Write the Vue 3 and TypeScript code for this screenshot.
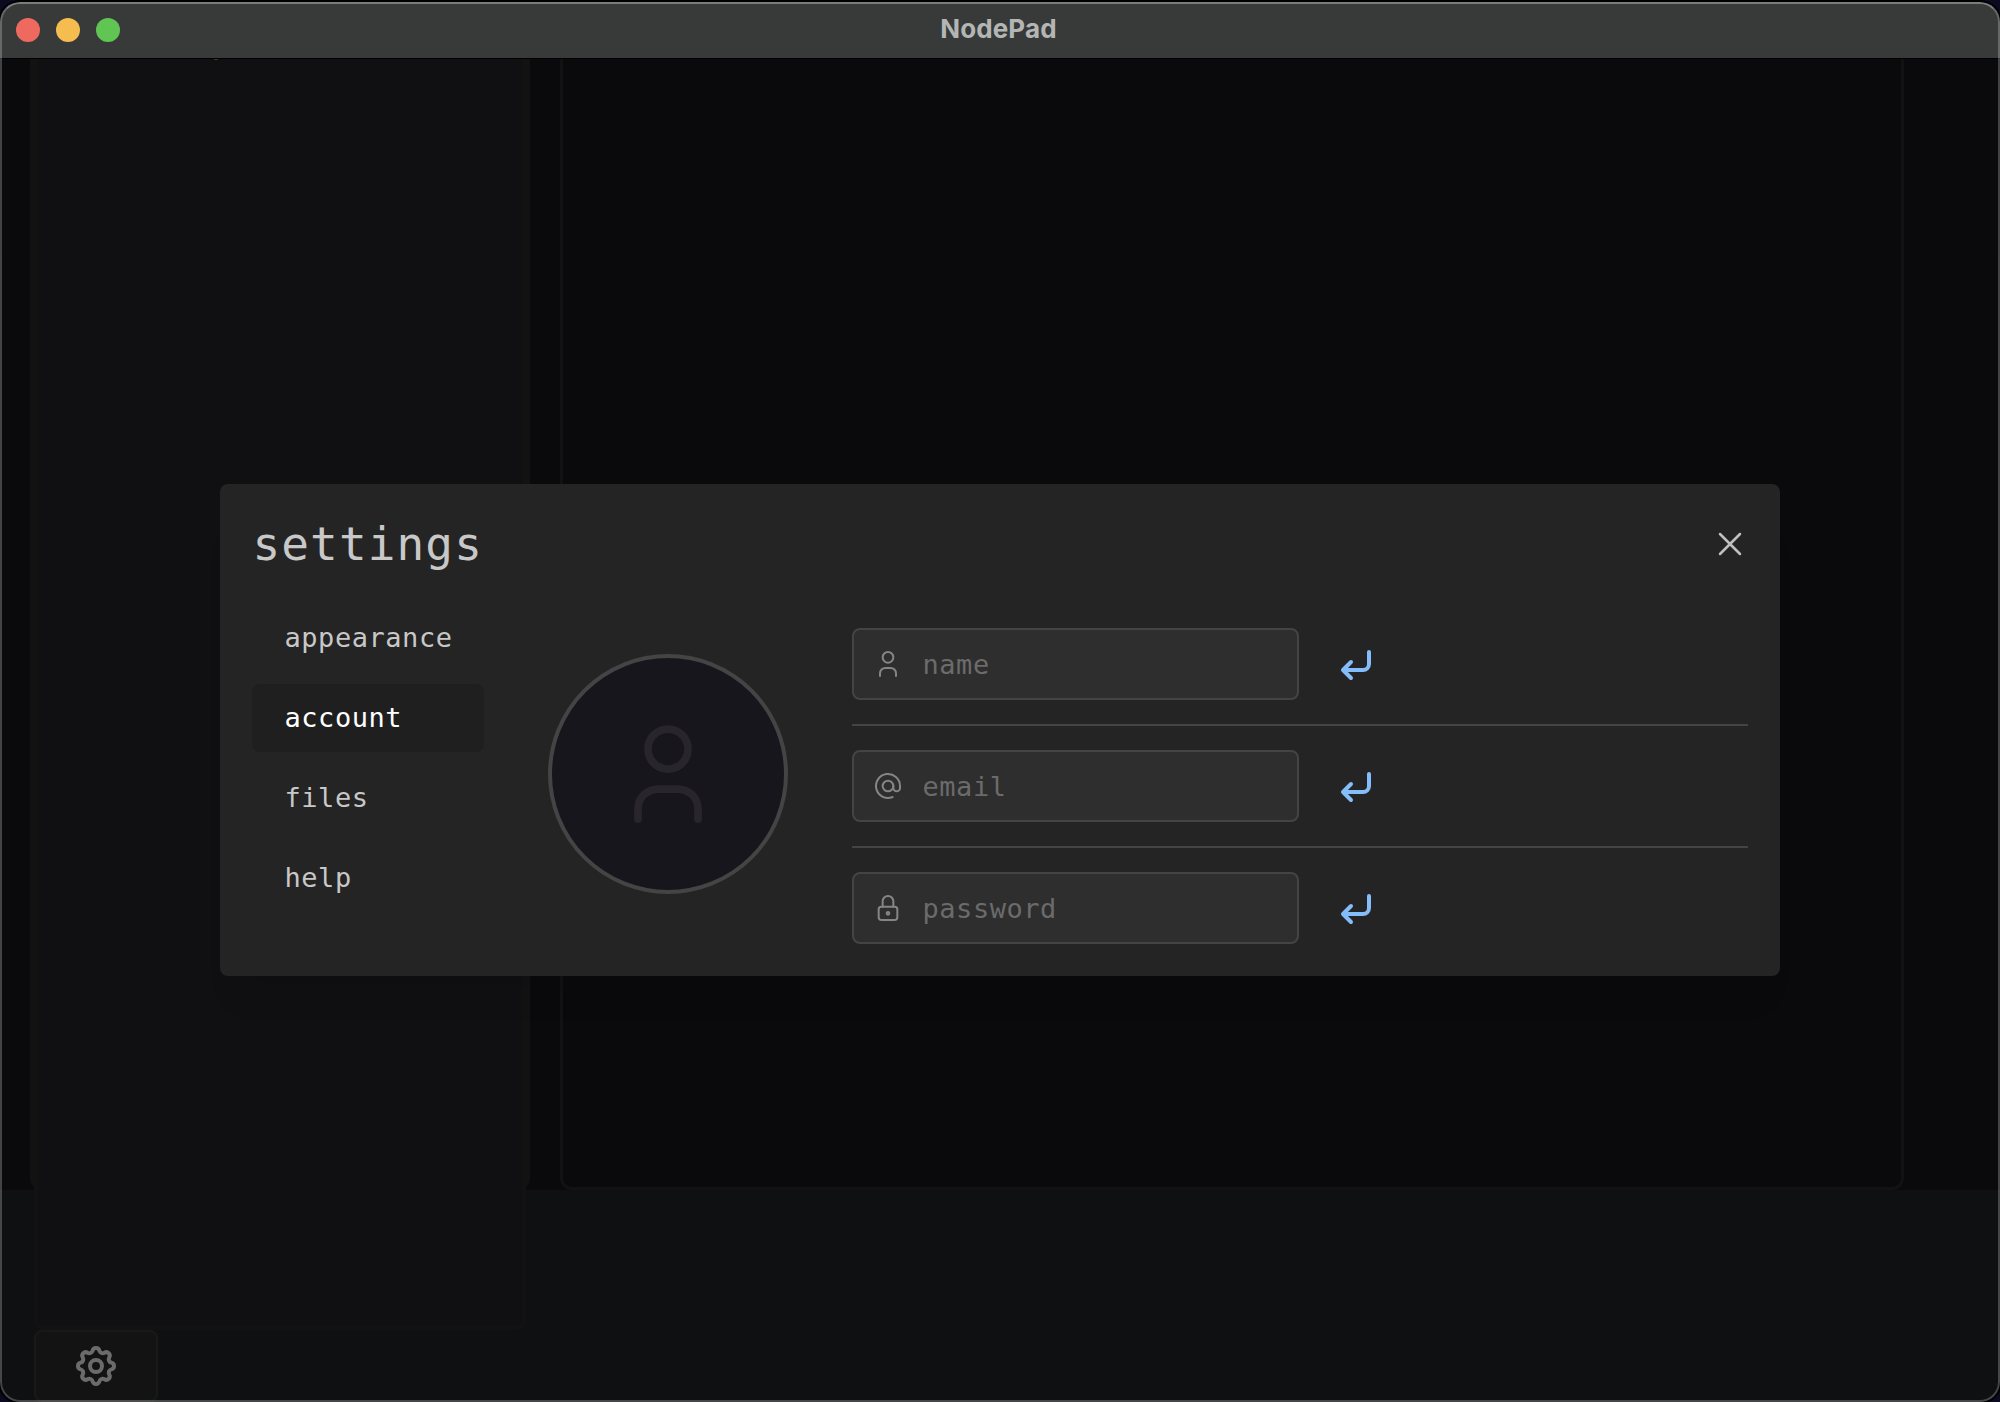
<script setup lang="ts">
import { ref } from 'vue'

interface Field {
  id: string
  icon: string[]
}

const tabs: string[] = ['appearance', 'account', 'files', 'help']
const active = ref<string>('account')

const userPaths: string[] = [
  'M8 7a4 4 0 1 0 8 0a4 4 0 1 0 -8 0',
  'M6 21v-2a4 4 0 0 1 4 -4h4a4 4 0 0 1 4 4v2',
]

const fields: Field[] = [
  { id: 'name', icon: userPaths },
  {
    id: 'email',
    icon: [
      'M8 12a4 4 0 1 0 8 0a4 4 0 1 0 -8 0',
      'M16 12v1.5a2.5 2.5 0 0 0 5 0v-1.5a9 9 0 1 0 -5.5 8.28',
    ],
  },
  {
    id: 'password',
    icon: [
      'M5 13a2 2 0 0 1 2 -2h10a2 2 0 0 1 2 2v6a2 2 0 0 1 -2 2h-10a2 2 0 0 1 -2 -2z',
      'M11 16a1 1 0 1 0 2 0a1 1 0 0 0 -2 0',
      'M8 11v-4a4 4 0 1 1 8 0v4',
    ],
  },
]
</script>

<template>
  <div class="desktop">
    <div class="window">
      <header class="titlebar">
        <div class="lights">
          <i class="light red"></i>
          <i class="light amber"></i>
          <i class="light green"></i>
        </div>
        <h1 class="app-title">NodePad</h1>
      </header>

      <div class="workspace">
        <div class="panes">
          <div class="sidebar"></div>
          <div class="editor"></div>
        </div>
        <div class="sidebar-inner"><i class="speck"></i></div>
        <button class="gear" aria-label="settings">
          <svg viewBox="0 0 24 24" width="48" height="48" stroke-width="2">
            <path d="M10.325 4.317c.426 -1.756 2.924 -1.756 3.35 0a1.724 1.724 0 0 0 2.573 1.066c1.543 -.94 3.31 .826 2.37 2.37a1.724 1.724 0 0 0 1.065 2.572c1.756 .426 1.756 2.924 0 3.35a1.724 1.724 0 0 0 -1.066 2.573c.94 1.543 -.826 3.31 -2.37 2.37a1.724 1.724 0 0 0 -2.572 1.065c-.426 1.756 -2.924 1.756 -3.35 0a1.724 1.724 0 0 0 -2.573 -1.066c-1.543 .94 -3.31 -.826 -2.37 -2.37a1.724 1.724 0 0 0 -1.065 -2.572c-1.756 -.426 -1.756 -2.924 0 -3.35a1.724 1.724 0 0 0 1.066 -2.573c-.94 -1.543 .826 -3.31 2.37 -2.37c1 .608 2.296 .07 2.572 -1.065z" />
            <circle cx="12" cy="12" r="3" />
          </svg>
        </button>
      </div>

      <section class="modal">
        <div class="modal-head">
          <h2>settings</h2>
          <button class="close" aria-label="close">
            <svg viewBox="0 0 24 24" width="40" height="40" stroke-width="1.5">
              <path d="M18 6l-12 12M6 6l12 12" />
            </svg>
          </button>
        </div>
        <div class="modal-body">
          <nav>
            <button
              v-for="tab in tabs"
              :key="tab"
              class="tab"
              :class="{ active: tab === active }"
              @click="active = tab"
            >{{ tab }}</button>
          </nav>
          <div class="avatar">
            <svg viewBox="0 0 24 24" width="120" height="120" stroke-width="1.55">
              <path v-for="d in userPaths" :key="d" :d="d" />
            </svg>
          </div>
          <div class="fields">
            <div v-for="field in fields" :key="field.id" class="row">
              <div class="field">
                <svg viewBox="0 0 24 24" width="32" height="32" stroke-width="1.5">
                  <path v-for="d in field.icon" :key="d" :d="d" />
                </svg>
                <span>{{ field.id }}</span>
              </div>
              <button class="submit" :aria-label="'save ' + field.id">
                <svg viewBox="0 0 24 24" width="48" height="48" stroke-width="2">
                  <path d="M18 6v6a3 3 0 0 1 -3 3h-10l4 -4m0 8l-4 -4" />
                </svg>
              </button>
            </div>
          </div>
        </div>
      </section>
    </div>
  </div>
</template>

<style>
body {
  margin: 0;
  overflow: hidden;
  background: #0b0a1e;
}
</style>

<style scoped>
* {
  box-sizing: border-box;
}
button {
  border: 0;
  margin: 0;
  padding: 0;
  background: none;
  color: inherit;
  font: inherit;
  letter-spacing: inherit;
}
svg {
  display: block;
  flex: none;
  fill: none;
  stroke: currentColor;
  stroke-linecap: round;
  stroke-linejoin: round;
}
.desktop {
  width: 2000px;
  height: 1402px;
  padding-top: 2px;
  background: #0b0a1e;
  font-family: 'DejaVu Sans Mono', monospace;
}
.window {
  position: relative;
  width: 2000px;
  height: 1400px;
  border-radius: 20px;
  overflow: hidden;
  background: #0a0a0c;
  box-shadow: 0 0 0 2px #000;
}
.window::after {
  content: '';
  position: absolute;
  inset: 0;
  border: 2px solid rgba(255, 255, 255, 0.23);
  border-top-color: rgba(255, 255, 255, 0.34);
  border-radius: 20px;
  pointer-events: none;
}
.titlebar {
  position: relative;
  display: flex;
  align-items: center;
  justify-content: center;
  height: 57px;
  padding: 0 3px 2px 0;
  background: #383a39;
  border-bottom: 1px solid #000;
}
.lights {
  position: absolute;
  left: 16px;
  top: 16px;
  display: flex;
  gap: 16px;
}
.light {
  width: 24px;
  height: 24px;
  border-radius: 50%;
}
.red { background: #ee6a5f; }
.amber { background: #f5bd4f; }
.green { background: #61c554; }
.app-title {
  margin: 0;
  font: 700 26px/32px Inter, sans-serif;
  letter-spacing: 0.1px;
  color: #b4b6b5;
}
.workspace {
  position: relative;
  height: 1343px;
  background: #0e1011;
}
.panes {
  display: flex;
  gap: 30px;
  height: 1131px;
  padding-left: 30px;
  background: #0a0a0c;
}
.sidebar {
  width: 500px;
  background: #101012;
  border: solid #121212;
  border-width: 0 4px 4px;
  border-radius: 0 0 12px 12px;
}
.editor {
  width: 1344px;
  background: #0a0a0c;
  border: solid #121212;
  border-width: 0 3px 3px;
  border-radius: 0 0 12px 12px;
}
.sidebar-inner {
  position: absolute;
  left: 34px;
  top: 0;
  width: 492px;
  height: 1271px;
  background: #101012;
  border: solid #121212;
  border-width: 0 4px 4px;
  border-radius: 0 0 10px 10px;
}
.speck {
  display: block;
  width: 4px;
  height: 1px;
  margin-left: 176px;
  background: #3a3a3a;
}
.gear {
  position: absolute;
  left: 34px;
  top: 1271px;
  display: flex;
  align-items: center;
  justify-content: center;
  width: 124px;
  height: 72px;
  background: #131313;
  border: 2px solid #191919;
  border-radius: 8px;
  color: #6b6b6b;
}
.modal {
  position: absolute;
  left: 220px;
  top: 482px;
  width: 1560px;
  height: 492px;
  padding: 32px;
  border-radius: 8px;
  background: #242424;
  box-shadow: 0 36px 32px -20px rgba(0, 0, 0, 0.1);
}
.modal-head {
  display: flex;
  justify-content: space-between;
  height: 88px;
}
.modal-head h2 {
  margin: 0 0 0 0.5px;
  font-weight: 400;
  font-size: 46px;
  letter-spacing: 1.11px;
  line-height: 56px;
  color: #c8c8c8;
}
.close {
  width: 40px;
  height: 40px;
  margin: 7.5px -1.5px 0 0;
  color: #c0c0c0;
}
.modal-body {
  display: flex;
}
nav {
  display: flex;
  flex-direction: column;
  gap: 12px;
  width: 232px;
}
.tab {
  height: 68px;
  padding: 0 31.5px 2px 32.5px;
  border-radius: 8px;
  text-align: left;
  font-size: 27px;
  letter-spacing: 0.545px;
  color: #c8c8c8;
}
.tab.active {
  background: #1f1f1f;
  color: #fff;
}
.avatar {
  display: flex;
  align-items: center;
  justify-content: center;
  width: 240px;
  height: 240px;
  margin: 50px 64px 0;
  border: 4px solid #444;
  border-radius: 50%;
  background: #17161c;
  color: #28252c;
}
.fields {
  flex: 1;
}
.row {
  display: flex;
  align-items: center;
  gap: 34px;
  height: 122px;
  border-bottom: 2px solid #444;
}
.row:last-child {
  height: 120px;
  border-bottom: 0;
}
.field {
  display: flex;
  align-items: center;
  gap: 18.5px;
  width: 447px;
  height: 72px;
  padding: 0 18px;
  border: 2px solid #444;
  border-radius: 8px;
  background: #2e2e2e;
  font-size: 27px;
  letter-spacing: 0.545px;
  color: #6b6b6b;
}
.field svg {
  color: #858585;
}
.submit {
  color: #84bdf9;
}
</style>
